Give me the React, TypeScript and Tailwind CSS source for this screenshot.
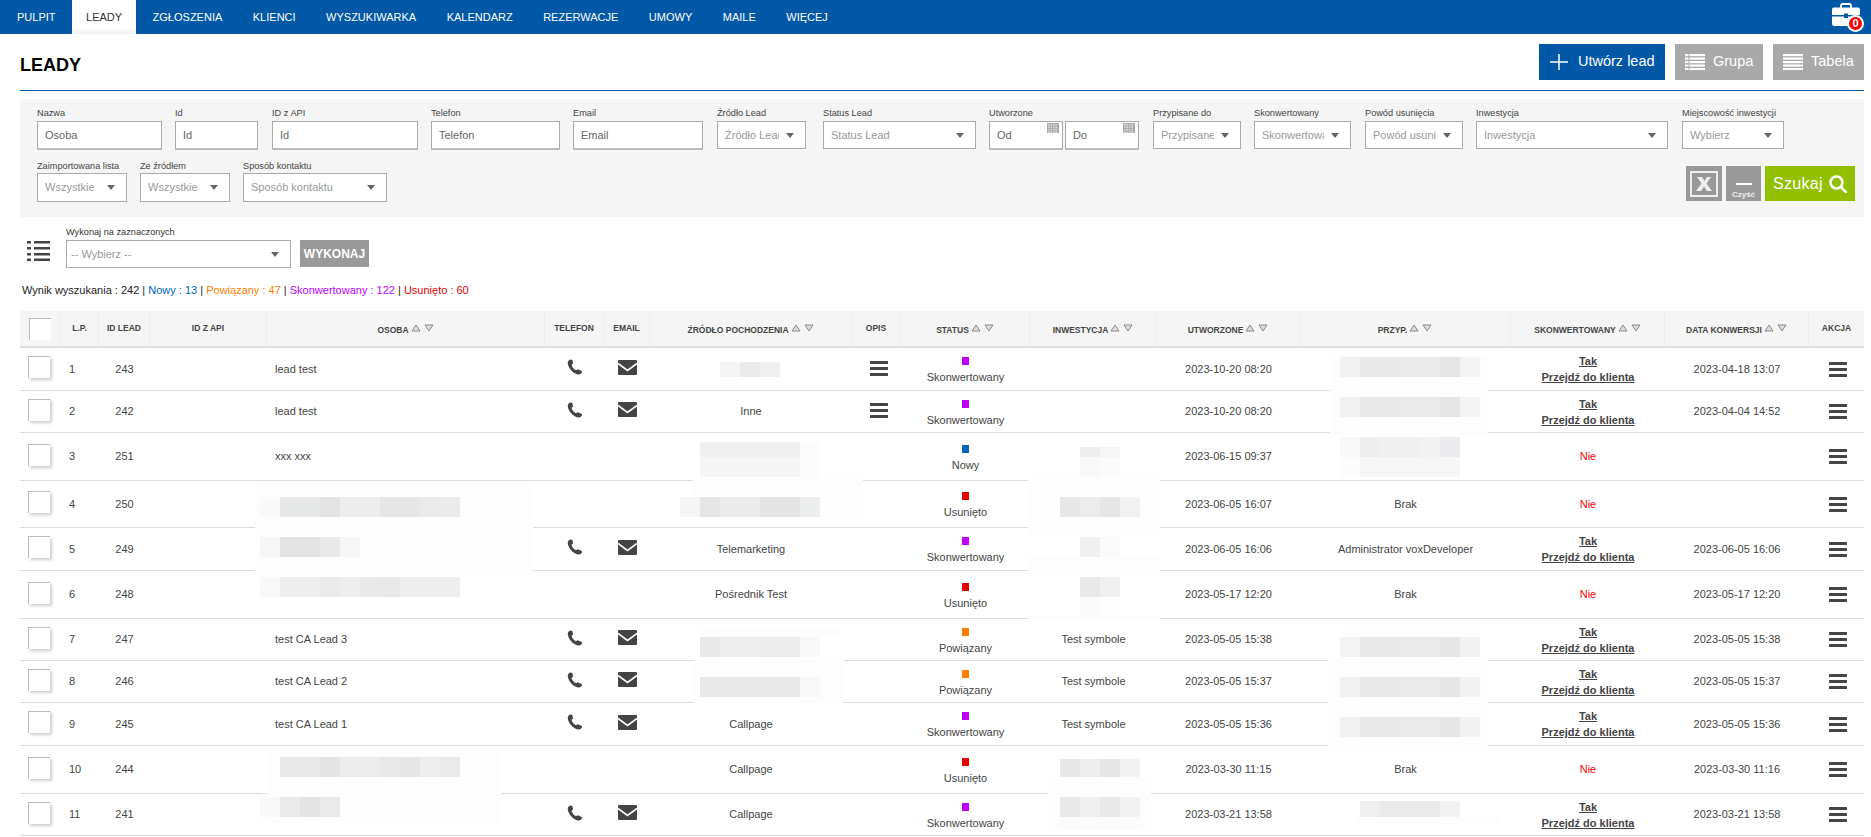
import React from "react";

const NAV = ["PULPIT", "LEADY", "ZGŁOSZENIA", "KLIENCI", "WYSZUKIWARKA", "KALENDARZ", "REZERWACJE", "UMOWY", "MAILE", "WIĘCEJ"];

const COLS = [
  { w: 41, label: "" },
  { w: 38, label: "L.P." },
  { w: 51, label: "ID LEAD" },
  { w: 117, label: "ID Z API" },
  { w: 278, label: "OSOBA", sort: true },
  { w: 59, label: "TELEFON" },
  { w: 46, label: "EMAIL" },
  { w: 202, label: "ŹRÓDŁO POCHODZENIA", sort: true },
  { w: 49, label: "OPIS" },
  { w: 129, label: "STATUS", sort: true },
  { w: 127, label: "INWESTYCJA", sort: true },
  { w: 143, label: "UTWORZONE", sort: true },
  { w: 211, label: "PRZYP.", sort: true },
  { w: 154, label: "SKONWERTOWANY", sort: true },
  { w: 144, label: "DATA KONWERSJI", sort: true },
  { w: 55, label: "AKCJA" },
];

type Status = "Skonwertowany" | "Nowy" | "Usunięto" | "Powiązany";

type Row = {
  h: string;
  lp: number;
  id: number;
  osoba?: string;
  contact?: boolean;
  source?: string;
  opis?: boolean;
  status: Status;
  inw?: string;
  created: string;
  przyp?: string;
  done: boolean;
  date?: string;
};

const ROWS: Row[] = [
  { h: "h-[43px]", lp: 1, id: 243, osoba: "lead test", contact: true, opis: true, status: "Skonwertowany", created: "2023-10-20 08:20", done: true, date: "2023-04-18 13:07" },
  { h: "h-[42px]", lp: 2, id: 242, osoba: "lead test", contact: true, source: "Inne", opis: true, status: "Skonwertowany", created: "2023-10-20 08:20", done: true, date: "2023-04-04 14:52" },
  { h: "h-[48px]", lp: 3, id: 251, osoba: "xxx xxx", status: "Nowy", created: "2023-06-15 09:37", done: false },
  { h: "h-[47px]", lp: 4, id: 250, status: "Usunięto", created: "2023-06-05 16:07", przyp: "Brak", done: false },
  { h: "h-[43px]", lp: 5, id: 249, contact: true, source: "Telemarketing", status: "Skonwertowany", created: "2023-06-05 16:06", przyp: "Administrator voxDeveloper", done: true, date: "2023-06-05 16:06" },
  { h: "h-[48px]", lp: 6, id: 248, source: "Pośrednik Test", status: "Usunięto", created: "2023-05-17 12:20", przyp: "Brak", done: false, date: "2023-05-17 12:20" },
  { h: "h-[42px]", lp: 7, id: 247, osoba: "test CA Lead 3", contact: true, status: "Powiązany", inw: "Test symbole", created: "2023-05-05 15:38", done: true, date: "2023-05-05 15:38" },
  { h: "h-[42px]", lp: 8, id: 246, osoba: "test CA Lead 2", contact: true, status: "Powiązany", inw: "Test symbole", created: "2023-05-05 15:37", done: true, date: "2023-05-05 15:37" },
  { h: "h-[43px]", lp: 9, id: 245, osoba: "test CA Lead 1", contact: true, source: "Callpage", status: "Skonwertowany", inw: "Test symbole", created: "2023-05-05 15:36", done: true, date: "2023-05-05 15:36" },
  { h: "h-[48px]", lp: 10, id: 244, source: "Callpage", status: "Usunięto", created: "2023-03-30 11:15", przyp: "Brak", done: false, date: "2023-03-30 11:16" },
  { h: "h-[42px]", lp: 11, id: 241, contact: true, source: "Callpage", status: "Skonwertowany", created: "2023-03-21 13:58", done: true, date: "2023-03-21 13:58" },
];

const STATUS_COLOR: Record<Status, string> = {
  Skonwertowany: "bg-[#c000ff]",
  Nowy: "bg-[#0066bb]",
  Usunięto: "bg-[#e60000]",
  Powiązany: "bg-[#ff8000]",
};

// pale patches that sit over the row lines around the blurred values
const HALOS = [
  [1330, 355, 158, 80],
  [255, 482, 278, 95],
  [1028, 478, 132, 59],
  [1028, 557, 132, 20],
  [1028, 616, 132, 4],
  [267, 752, 234, 70],
  [1048, 777, 103, 53],
  [1328, 658, 160, 92],
  [1340, 630, 140, 7],
  [694, 658, 149, 45],
  [700, 628, 140, 9],
  [693, 478, 170, 42],
  [1357, 817, 143, 8],
];

// blurred values: x, y, tile height, one colour per 20px tile
const MOSAICS: [number, number, number, string[]][] = [
  [720, 362, 15, ["#f5f5f5", "#ebebeb", "#f0f0f0"]],
  [1340, 357, 20, ["#f1f1f1", "#e9e9e9", "#e9e9e9", "#eaeaea", "#eaeaea", "#e5e5e5", "#f4f4f4"]],
  [1340, 397, 20, ["#f1f1f1", "#e9e9e9", "#e9e9e9", "#eaeaea", "#eaeaea", "#e5e5e5", "#f4f4f4"]],
  [1340, 437, 20, ["#f8f8f8", "#eeeeee", "#f0f0f0", "#f0f0f0", "#f2f2f2", "#ebebef"]],
  [1340, 457, 20, ["#fcfcfc", "#f6f6f6", "#f6f6f6", "#f6f6f6", "#f6f6f6", "#f6f6f6"]],
  [1080, 447, 10, ["#eeeeee", "#f6f6f6"]],
  [1080, 457, 20, ["#f8f8f8", "#fbfbfb"]],
  [1060, 497, 20, ["#e6e8e8", "#ececec", "#e6e6e6", "#f1f1f1"]],
  [260, 497, 20, ["#f9f9f9", "#e6e8e8", "#e6e8e8", "#e3e3e3", "#ededed", "#ededed", "#e6e6e6", "#e6e6e6", "#eaeaea", "#ebebeb"]],
  [680, 497, 20, ["#f5f5f5", "#e5e5e5", "#ebebeb", "#ebebeb", "#e4e4e4", "#e4e4e4", "#ebeeed"]],
  [700, 442, 15, ["#f0f0f0", "#f0f0f0", "#f0f0f0", "#f0f0f0", "#f0f0f0", "#fcfcfc"]],
  [700, 457, 20, ["#f5f5f5", "#f5f5f5", "#f5f5f5", "#f5f5f5", "#f5f5f5", "#fcfcfc"]],
  [260, 537, 20, ["#f6f6f6", "#e3e3e3", "#e3e3e3", "#e9e9e9", "#f6f6f6"]],
  [1080, 537, 20, ["#f0f0f0", "#fafafa"]],
  [260, 577, 20, ["#f8f8f8", "#eeeeee", "#eeeeee", "#eaeaea", "#eeeeee", "#e9e9e9", "#e8e8e8", "#eeeeee", "#eeeeee", "#eeeeee"]],
  [1080, 577, 20, ["#e9e9e9", "#f0f0f0"]],
  [1080, 597, 20, ["#fbfbfb", "#fdfdfd"]],
  [700, 637, 20, ["#e8e8e8", "#eeeeee", "#eeeeee", "#ececec", "#ececec", "#f8f8f8"]],
  [700, 677, 20, ["#e8e8e8", "#e8e8e8", "#e8e8e8", "#e8e8e8", "#e8e8e8", "#f8f8f8"]],
  [1340, 637, 20, ["#f3f3f3", "#e9e9e9", "#e9e9e9", "#eaeaea", "#eaeaea", "#e6e6e6", "#f2f2f2"]],
  [1340, 677, 20, ["#f1f1f1", "#e9e9e9", "#e9e9e9", "#eaeaea", "#eaeaea", "#e6e6e6", "#f2f2f2"]],
  [1340, 717, 20, ["#f1f1f1", "#e9e9e9", "#e9e9e9", "#eaeaea", "#eaeaea", "#e6e6e6", "#f2f2f2"]],
  [280, 757, 20, ["#e9e9e9", "#e9e9e9", "#e4e4e4", "#ececec", "#ececec", "#e8e8e8", "#e6e6e6", "#eeeeee", "#eaeaea"]],
  [260, 797, 20, ["#f8f8f8", "#eaeaea", "#e4e4e4", "#eaeaea"]],
  [1060, 759, 18, ["#e6e8e8", "#eeeeee", "#e6e6e6", "#f2f2f2"]],
  [1060, 797, 20, ["#e9e9e9", "#efefef", "#e9e9e9", "#f2f2f2"]],
  [1060, 817, 12, ["#fbfbfb", "#fbfbfb", "#fbfbfb", "#fbfbfb"]],
  [1360, 801, 16, ["#efefef", "#eaeaea", "#eaeaea", "#eaeaea", "#f2f2f2"]],
];

function Briefcase() {
  return (
    <div className="relative h-[25px] w-[30px]">
      <svg width="28" height="23" viewBox="0 0 28 23" className="absolute left-0 top-0">
        <path d="M9 5V2.500A1.500 1.500 0 0 1 10.500 1h7A1.500 1.500 0 0 1 19 2.500V5" fill="none" stroke="#fff" strokeWidth="1.800" />
        <path d="M2 4.500h24a2 2 0 0 1 2 2V12H16v-1.500h-4V12H0V6.500a2 2 0 0 1 2-2z" fill="#fff" />
        <path d="M0 13.500h12V15h4v-1.500h12V21a2 2 0 0 1-2 2H2a2 2 0 0 1-2-2z" fill="#fff" />
      </svg>
      <span className="absolute left-[15px] top-[12px] flex h-[17px] w-[17px] items-center justify-center rounded-full border-2 border-white bg-[#f00000] text-[11px] font-bold leading-none text-white">
        0
      </span>
    </div>
  );
}

function GroupIcon() {
  return (
    <svg width="20" height="16" viewBox="0 0 20 16" fill="#fff">
      {[0, 3.5, 7, 10.5, 14].map((y) => (
        <g key={y}>
          <rect x="0" y={y} width="3.500" height="2.200" />
          <rect x="4.500" y={y} width="15.500" height="2.200" />
        </g>
      ))}
    </svg>
  );
}

function TableIcon() {
  return (
    <svg width="20" height="16" viewBox="0 0 20 16" fill="#fff">
      {[0, 3.5, 7, 10.5, 14].map((y) => (
        <rect key={y} x="0" y={y} width="20" height="2.200" />
      ))}
    </svg>
  );
}

function ExcelIcon() {
  return (
    <svg width="28" height="26" viewBox="0 0 28 26" fill="none">
      <rect x="1" y="1" width="26" height="24" stroke="#eeeeee" strokeWidth="2" />
      <path d="M7 6h5l2.500 4L17 6h4l-4.500 6.500L22 20h-5l-3-4.500L11 20H6l5.500-7.500z" fill="#eeeeee" />
    </svg>
  );
}

function SearchIcon() {
  return (
    <svg width="18" height="18" viewBox="0 0 18 18" fill="none" stroke="#fff" strokeWidth="2.600">
      <circle cx="7.500" cy="7.500" r="6" />
      <path d="M11.800 11.800L16.800 16.800" strokeLinecap="round" />
    </svg>
  );
}

function ListIcon() {
  return (
    <svg width="23" height="21" viewBox="0 0 23 21" fill="#444444">
      {[1, 7, 13, 18.5].map((y) => (
        <g key={y}>
          <rect x="0" y={y} width="4" height="2.500" />
          <rect x="7" y={y} width="16" height="2.500" />
        </g>
      ))}
    </svg>
  );
}

function BarsIcon() {
  return (
    <svg width="18" height="15" viewBox="0 0 18 15" fill="#444444">
      <rect width="18" height="3" rx="0.500" />
      <rect y="6" width="18" height="3" rx="0.500" />
      <rect y="12" width="18" height="3" rx="0.500" />
    </svg>
  );
}

function PhoneIcon() {
  return (
    <svg width="16" height="16" viewBox="0 0 16 16" fill="#444444">
      <path d="M3.200 0.400 L5.400 0.900 L6.100 4.400 L4.500 5.700 C5.100 8 6.700 10 8.900 11.300 L10.700 10.200 L14.800 12 L15 13.600 C14.200 15.100 12.700 15.800 11 15.500 C6.200 14.500 1.600 9.400 0.800 4.700 C0.500 3 1.300 1.300 3.200 0.400 Z" />
    </svg>
  );
}

function MailIcon() {
  return (
    <svg width="19" height="15" viewBox="0 0 19 15">
      <rect width="19" height="15" rx="1" fill="#444444" />
      <path d="M0 3.500L9.500 10.500L19 3.500" fill="none" stroke="#fff" strokeWidth="1.600" />
    </svg>
  );
}

function SortIcon() {
  return (
    <svg width="23" height="8" viewBox="0 0 23 8" fill="#dddddd" stroke="#888888" strokeWidth="1" className="mb-[5px] ml-[2px] shrink-0">
      <path d="M5 1L9 7H1z" />
      <path d="M14 1h8l-4 6z" />
    </svg>
  );
}

function CalendarGrid() {
  return (
    <svg width="12" height="10" viewBox="0 0 12 10" className="absolute right-[3px] top-[1px]">
      <rect width="12" height="10" fill="#aaaaaa" />
      {[1, 3.5, 6, 8.5].map((y) =>
        [1, 3.5, 6, 8.5].map((x) => <rect key={`${x}-${y}`} x={x} y={y} width="1.500" height="1.500" fill="#dddddd" />),
      )}
    </svg>
  );
}

function Field({ label, w, compact, children }: { label: string; w: string; compact?: boolean; children: React.ReactNode }) {
  return (
    <div className={`flex flex-col ${w}`}>
      <div className={`${compact ? "h-[13px]" : "h-[14px]"} whitespace-nowrap text-[9.2px] leading-[12px] text-[#444444]`}>{label}</div>
      {children}
    </div>
  );
}

function TextInput({ placeholder }: { placeholder: string }) {
  return (
    <div className="flex h-[29px] items-center border border-b-2 border-[#aaaaaa] border-b-[#bbbbbb] bg-white px-[7px] text-[11px] text-[#666666]">{placeholder}</div>
  );
}

function SelectBox({ placeholder, tall, pad = "pl-[7px]" }: { placeholder: string; tall?: boolean; pad?: string }) {
  return (
    <div className={`flex ${tall ? "h-[29px]" : "h-[28px]"} items-center border border-[#aaaaaa] bg-white ${pad} pr-[11px] text-[11px] text-[#999999]`}>
      <span className="min-w-0 flex-1 overflow-hidden whitespace-nowrap">{placeholder}</span>
      <svg width="8" height="5" viewBox="0 0 8 5" fill="#666666" className="ml-[7px] shrink-0">
        <path d="M0 0h8L4 5z" />
      </svg>
    </div>
  );
}

function DateInput({ placeholder, w }: { placeholder: string; w: string }) {
  return (
    <div className={`relative flex h-[29px] ${w} items-center border border-b-2 border-[#aaaaaa] border-b-[#bbbbbb] bg-white px-[7px] text-[11px] text-[#666666]`}>
      {placeholder}
      <CalendarGrid />
    </div>
  );
}

function Filters() {
  return (
    <div className="h-[118px] bg-[#f5f5f5] pl-[17px] pr-[9px] pt-[8px]">
      <div className="flex gap-x-[13px]">
        <Field label="Nazwa" w="w-[125px]"><TextInput placeholder="Osoba" /></Field>
        <Field label="Id" w="w-[83px]"><TextInput placeholder="Id" /></Field>
        <Field label="ID z API" w="w-[146px] ml-[1px]"><TextInput placeholder="Id" /></Field>
        <Field label="Telefon" w="w-[129px]"><TextInput placeholder="Telefon" /></Field>
        <Field label="Email" w="w-[130px]"><TextInput placeholder="Email" /></Field>
        <Field label="Źródło Lead" w="w-[89px] ml-[1px]"><SelectBox placeholder="Źródło Lead" /></Field>
        <Field label="Status Lead" w="w-[153px] ml-[4px]"><SelectBox placeholder="Status Lead" /></Field>
        <Field label="Utworzone" w="w-[150px]">
          <div className="flex gap-[2px]">
            <DateInput placeholder="Od" w="w-[74px]" />
            <DateInput placeholder="Do" w="w-[74px]" />
          </div>
        </Field>
        <Field label="Przypisane do" w="w-[88px] ml-[1px]"><SelectBox placeholder="Przypisane do" /></Field>
        <Field label="Skonwertowany" w="w-[97px]"><SelectBox placeholder="Skonwertowany" /></Field>
        <Field label="Powód usunięcia" w="w-[98px] ml-[1px]"><SelectBox placeholder="Powód usunięcia" /></Field>
        <Field label="Inwestycja" w="w-[192px]"><SelectBox placeholder="Inwestycja" /></Field>
        <Field label="Miejscowość inwestycji" w="w-[102px] ml-[1px]"><SelectBox placeholder="Wybierz" /></Field>
      </div>
      <div className="mt-[10px] flex items-start justify-between">
        <div className="flex gap-x-[13px]">
          <Field label="Zaimportowana lista" w="w-[90px]" compact><SelectBox placeholder="Wszystkie" tall /></Field>
          <Field label="Ze źródłem" w="w-[90px]" compact><SelectBox placeholder="Wszystkie" tall /></Field>
          <Field label="Sposób kontaktu" w="w-[144px]" compact><SelectBox placeholder="Sposób kontaktu" tall /></Field>
        </div>
        <div className="mt-[6px] flex gap-[4px]">
          <button className="flex h-[35px] w-[36px] items-center justify-center bg-[#999999]">
            <ExcelIcon />
          </button>
          <button className="flex h-[35px] w-[35px] flex-col items-center bg-[#999999] pt-[17px] text-[8px] font-bold leading-[10px] text-[#eeeeee]">
            <span className="h-[2px] w-[16px] bg-white" />
            <span className="mt-[5px]">Czyść</span>
          </button>
          <button className="flex h-[35px] w-[90px] items-center justify-center gap-[6px] bg-[#92c000] text-[16px] tracking-[0.3px] text-white">
            Szukaj
            <SearchIcon />
          </button>
        </div>
      </div>
    </div>
  );
}

function LeadRow({ row }: { row: Row }) {
  return (
    <tr className={`${row.h} text-[11px] text-[#444444]`}>
      <td className="border-b border-[#dddddd] pl-[8px] align-middle">
        <div className="mb-[4px] h-[22px] w-[22px] border-l border-t border-[#bbbbbb] bg-white shadow-[2px_2px_3px_rgba(0,0,0,0.2)]" />
      </td>
      <td className="border-b border-[#dddddd] pl-[8px]">{row.lp}</td>
      <td className="border-b border-[#dddddd] text-center">{row.id}</td>
      <td className="border-b border-[#dddddd]" />
      <td className="border-b border-[#dddddd] pl-[8px]">{row.osoba}</td>
      <td className="border-b border-[#dddddd]">
        {row.contact && <div className="mb-[4px] flex justify-center"><PhoneIcon /></div>}
      </td>
      <td className="border-b border-[#dddddd]">
        {row.contact && <div className="mb-[4px] flex justify-center"><MailIcon /></div>}
      </td>
      <td className="border-b border-[#dddddd] text-center">{row.source}</td>
      <td className="border-b border-[#dddddd]">
        {row.opis && <div className="mb-[2px] ml-[4px] flex justify-center"><BarsIcon /></div>}
      </td>
      <td className="border-b border-[#dddddd] text-center">
        <div className="pt-[3px]">
          <div className={`mx-auto h-[8px] w-[7px] ${STATUS_COLOR[row.status]}`} />
          <div className="mt-[6px] leading-[13px]">{row.status}</div>
        </div>
      </td>
      <td className="border-b border-[#dddddd] text-center">{row.inw}</td>
      <td className="border-b border-[#dddddd] text-center">{row.created}</td>
      <td className="border-b border-[#dddddd] text-center">{row.przyp}</td>
      <td className="border-b border-[#dddddd] text-center">
        {row.done ? (
          <div className="font-bold leading-[16px] underline">
            <div>Tak</div>
            <div>Przejdź do klienta</div>
          </div>
        ) : (
          <span className="text-[#ff0000]">Nie</span>
        )}
      </td>
      <td className="border-b border-[#dddddd] text-center">{row.date}</td>
      <td className="border-b border-[#dddddd]">
        <div className="ml-[3px] flex justify-center"><BarsIcon /></div>
      </td>
    </tr>
  );
}

function LeadsTable() {
  return (
    <table className="w-[1844px] table-fixed border-separate border-spacing-0">
      <colgroup>
        {COLS.map((c) => (
          <col key={c.label} style={{ width: c.w }} />
        ))}
      </colgroup>
      <thead>
        <tr className="h-[37px] bg-[#f5f5f5]">
          {COLS.map((c, i) => (
            <th key={c.label} className={`border-b-2 border-[#dddddd] p-0 text-[8.5px] font-bold text-[#444444] ${i < COLS.length - 1 ? "border-r border-r-[#eeeeee]" : ""}`}>
              {i === 0 ? (
                <div className="ml-[9px] h-[22px] w-[22px] border-l border-t border-[#bbbbbb] bg-white" />
              ) : (
                <div className={`flex items-end justify-center whitespace-nowrap ${c.sort ? "pt-[3px]" : ""}`}>
                  <span>{c.label}</span>
                  {c.sort && <SortIcon />}
                </div>
              )}
            </th>
          ))}
        </tr>
      </thead>
      <tbody>
        {ROWS.map((r) => (
          <LeadRow key={r.id} row={r} />
        ))}
      </tbody>
    </table>
  );
}

function Blur() {
  return (
    <>
      {HALOS.map(([x, y, w, h], i) => (
        <div key={i} className="pointer-events-none absolute bg-[#fdfdfd]" style={{ left: x, top: y, width: w, height: h }} />
      ))}
      {MOSAICS.map(([x, y, h, colors], i) => (
        <div key={i} className="pointer-events-none absolute flex" style={{ left: x, top: y, height: h }}>
          {colors.map((c, j) => (
            <div key={j} className="w-[20px]" style={{ backgroundColor: c }} />
          ))}
        </div>
      ))}
    </>
  );
}

export default function App() {
  return (
    <div className="relative min-h-[837px] overflow-hidden bg-white [font-family:'Liberation_Sans',Arial,sans-serif]">
      <nav className="flex h-[34px] items-stretch justify-between bg-[#0158a7] pl-[3px] pr-[9px]">
        <div className="flex gap-[2.5px]">
          {NAV.map((n) => (
            <a key={n} className={`flex items-center px-[14px] text-[11px] ${n === "LEADY" ? "bg-white text-[#333333] shadow-[inset_0_-6px_6px_-6px_rgba(0,0,0,0.15)]" : "text-white"}`}>
              {n}
            </a>
          ))}
        </div>
        <div className="pt-[3px]">
          <Briefcase />
        </div>
      </nav>

      <div className="pl-[20px] pr-[7px]">
        <header className="mb-[8px] flex h-[57px] items-center justify-between border-b border-[#0158a7]">
          <h1 className="mt-[7px] text-[18px] font-bold text-black">LEADY</h1>
          <div className="flex gap-[10px]">
            <button className="flex h-[36px] w-[126px] items-center gap-[9px] bg-[#0158a7] pl-[10px] text-[14.5px] text-white">
              <svg width="20" height="18" viewBox="0 0 20 18" stroke="#fff" strokeWidth="1.500">
                <path d="M10 1v16M1 9h18" />
              </svg>
              Utwórz lead
            </button>
            <button className="flex h-[36px] w-[88px] items-center gap-[8px] bg-[#a9a9a9] pl-[10px] text-[14.5px] text-white">
              <GroupIcon />
              Grupa
            </button>
            <button className="flex h-[36px] w-[91px] items-center gap-[8px] bg-[#a9a9a9] pl-[10px] text-[14.5px] text-white">
              <TableIcon />
              Tabela
            </button>
          </div>
        </header>

        <Filters />

        <div className="flex pl-[7px] pt-[9px]">
          <div className="mt-[14px]">
            <ListIcon />
          </div>
          <div className="ml-[16px] w-[225px]">
            <div className="h-[14px] text-[9.2px] leading-[12px] text-[#333333]">Wykonaj na zaznaczonych</div>
            <SelectBox placeholder="-- Wybierz --" pad="pl-[4px]" />
          </div>
          <button className="ml-[9px] mt-[14px] h-[27px] w-[69px] bg-[#999999] text-[12px] font-bold text-white">WYKONAJ</button>
        </div>

        <div className="mt-[15px] pl-[2px] text-[11px] leading-[14px] text-[#222222]">
          Wynik wyszukania : 242 | <span className="text-[#0066bb]">Nowy : 13</span> | <span className="text-[#ff8000]">Powiązany : 47</span> | <span className="text-[#bf00ff]">Skonwertowany : 122</span> | <span className="text-[#e00000]">Usunięto : 60</span>
        </div>

        <div className="mt-[14px]">
          <LeadsTable />
        </div>
      </div>

      <Blur />
    </div>
  );
}
